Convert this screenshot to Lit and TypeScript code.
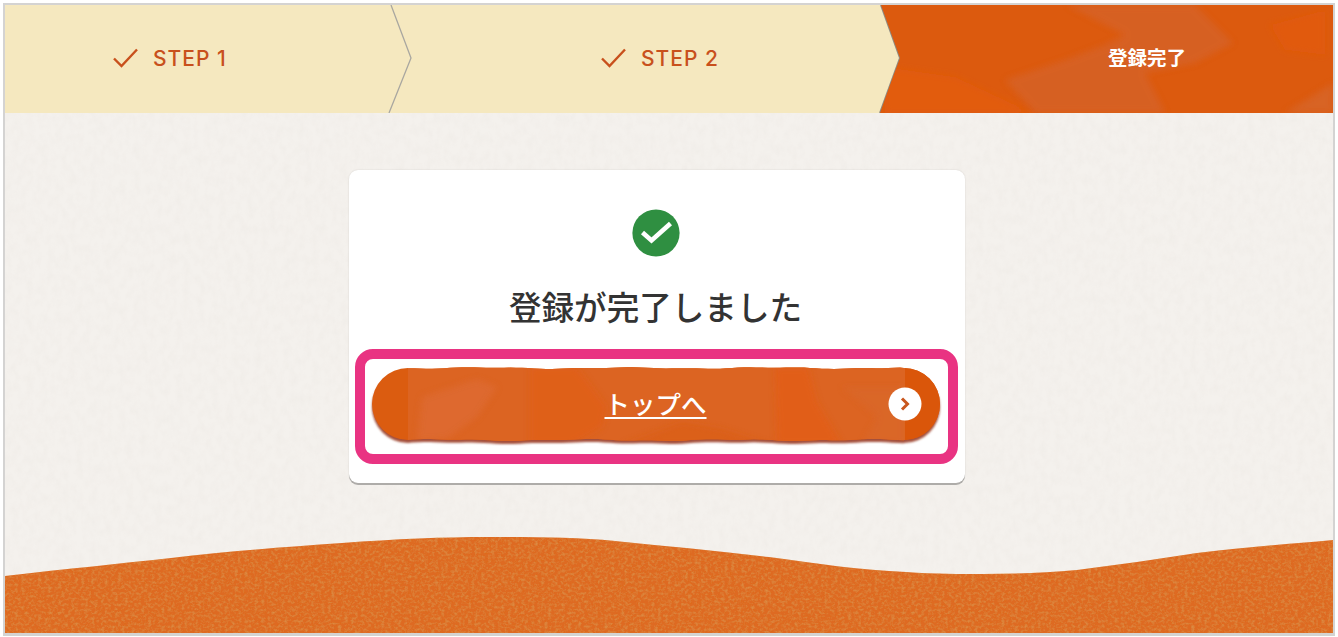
import { LitElement, html, css, svg } from "lit";
import { customElement } from "lit/decorators.js";

/** Hand-torn outline of the painted button: a pill whose long edges wobble slightly. */
function tornPill(w: number, h: number, r: number): string {
  const wob = (x: number, a: number) => a * Math.sin(x / 23) + a * 0.6 * Math.sin(x / 9 + 1);
  const top: string[] = [];
  const bottom: string[] = [];
  for (let x = r; x <= w - r; x += 6) {
    top.push(`L${x} ${(1 + wob(x, 0.6)).toFixed(2)}`);
  }
  for (let x = w - r; x >= r; x -= 6) {
    bottom.push(`L${x} ${(h - 1 + wob(x + 40, 0.7)).toFixed(2)}`);
  }
  return `M${r} 1 ${top.join(" ")} L${w - r} 1 A${r} ${r} 0 0 1 ${w - r} ${h - 1} ${bottom.join(" ")} L${r} ${h - 1} A${r} ${r} 0 0 1 ${r} 1Z`;
}

@customElement("app-root")
export class AppRoot extends LitElement {
  static styles = css`
    :host { display: block; width: 1338px; height: 637px; background: #fff; box-sizing: border-box; padding: 3px 3px 1px 3px; font-family: "Noto Sans CJK JP", sans-serif; overflow: hidden; }
    .frame { box-sizing: border-box; width: 1332px; height: 633px; border: 2px solid #d4d3d2; border-bottom-width: 3px; position: relative; display: flex; flex-direction: column; background: #f4f1ed; overflow: hidden; }
    .paper { position: absolute; inset: 0; width: 100%; height: 100%; }
    .bar { position: relative; height: 108px; display: flex; flex: none; background: #f5e8bf; }
    .bar-art { position: absolute; inset: 0; width: 100%; height: 100%; }
    .step { position: relative; display: flex; align-items: center; gap: 15px; color: #c8501c; font-family: "Inter", "Noto Sans", sans-serif; font-size: 21px; font-weight: 500; letter-spacing: 1px; box-sizing: border-box; padding-bottom: 2px; }
    .s1 { width: 386px; padding-left: 108px; }
    .s2 { width: 490px; padding-left: 210px; }
    .s3 { flex: 1; padding-left: 227px; padding-bottom: 5px; color: #fff; font-family: "Noto Sans CJK JP", sans-serif; font-size: 19.5px; font-weight: 700; letter-spacing: 0; }
    .tick { width: 25px; height: 20px; flex: none; }
    .content { position: relative; flex: 1; display: flex; justify-content: center; padding: 57px 25px 0 0; min-height: 0; }
    .card { box-sizing: border-box; width: 616px; height: 313px; background: #fff; border-radius: 9px; box-shadow: 0 2px 0 #aeaca9, 0 0 2px rgba(0,0,0,.12); display: flex; flex-direction: column; align-items: center; padding-top: 39px; }
    .ok { width: 48px; height: 48px; flex: none; margin-right: 2px; }
    h1 { margin: 21px 2px 0 0; font-size: 32.6px; line-height: 56px; height: 71px; font-weight: 500; color: #333; letter-spacing: 0; }
    .focus { box-sizing: border-box; width: 603px; height: 115px; border: 10px solid #e93382; border-radius: 18px; padding: 8px 7px; display: flex; background: #fff; }
    .btn { position: relative; flex: 1; height: 78px; display: flex; align-items: center; justify-content: center; color: #fff; font-size: 25.5px; font-weight: 500; }
    .btn-art { position: absolute; inset: 0; width: 100%; height: 100%; overflow: visible; }
    .label { position: relative; margin-right: 2px; margin-bottom: 8px; text-decoration: underline; text-decoration-thickness: 2px; text-underline-offset: 3px; }
    .go { position: absolute; right: 19px; top: 20px; width: 34px; height: 34px; }
    .wave { display: block; flex: none; width: 1328px; height: 96px; position: relative; }
  `;

  private tick() {
    return html`<svg class="tick" viewBox="0 0 25 20"><path d="M1 10.5 8.5 18 24 1.5" fill="none" stroke="#c8501c" stroke-width="2.4"/></svg>`;
  }

  render() {
    const pill = tornPill(568, 74, 36);
    return html`
      <div class="frame">
        <svg class="paper" aria-hidden="true">
          <filter id="paper" x="0" y="0" width="100%" height="100%">
            <feTurbulence type="fractalNoise" baseFrequency="0.14 0.1" numOctaves="4" seed="7"/>
            <feColorMatrix values="0 0 0 0 .62  0 0 0 0 .56  0 0 0 0 .5  0 0 0 .5 -.18"/>
          </filter>
          <rect width="100%" height="100%" filter="url(#paper)" opacity=".3"/>
        </svg>
        <div class="bar">
          <svg class="bar-art" viewBox="0 0 1328 108" preserveAspectRatio="none" aria-hidden="true">
            ${svg`
            <defs>
              <clipPath id="stepClip"><path d="M876 0H1328V108H875L895 53Z"/></clipPath>
              <filter id="soft" x="-10%" y="-20%" width="120%" height="140%"><feGaussianBlur stdDeviation="3"/></filter>
            </defs>
            <path d="M386 0 406 53 384 108" fill="none" stroke="#a9a7a0" stroke-width="1.3"/>
            <path d="M876 0 895 53 875 108" fill="none" stroke="#8f8a80" stroke-width="2"/>
            <g clip-path="url(#stepClip)">
              <rect x="870" width="460" height="108" fill="#dc5a0e"/>
              <path d="M1062 0H1190L1228 38 1190 58 1140 68 1160 108H1030L1000 75 1060 55 1100 40 1120 30Z" fill="#d5642c" opacity=".75" filter="url(#soft)"/>
              <path d="M880 62 950 72 1010 100 1025 108H880Z" fill="#e25b0a" filter="url(#soft)"/>
              <path d="M1280 108 1328 78V108Z" fill="#d6672e" opacity=".7" filter="url(#soft)"/>
              <path d="M1265 20 1320 5V50L1280 45Z" fill="#e15a08" filter="url(#soft)"/>
            </g>`}
          </svg>
          <div class="step s1">${this.tick()}<span>STEP 1</span></div>
          <div class="step s2">${this.tick()}<span>STEP 2</span></div>
          <div class="step s3"><span>登録完了</span></div>
        </div>
        <div class="content">
          <div class="card">
            <svg class="ok" viewBox="0 0 48 48" aria-hidden="true">
              <circle cx="24" cy="24" r="23.6" fill="#2f8f41"/>
              <path d="M10.5 23.5 19.5 31.5 38.5 14.5" fill="none" stroke="#fff" stroke-width="4.6"/>
            </svg>
            <h1>登録が完了しました</h1>
            <div class="focus">
              <a class="btn">
                <svg class="btn-art" viewBox="0 0 569 78" aria-hidden="true">
                  ${svg`
                  <defs>
                    <filter id="shade" x="-2%" y="-10%" width="104%" height="130%"><feGaussianBlur stdDeviation="1"/></filter>
                    <filter id="btnSoft" x="-20%" y="-20%" width="140%" height="140%"><feGaussianBlur stdDeviation="3"/></filter>
                    <clipPath id="pill"><path d="${pill}"/></clipPath>
                  </defs>
                  <path d="${pill}" transform="translate(0 3)" fill="#a4503a" filter="url(#shade)"/>
                  <g clip-path="url(#pill)">
                    <rect width="569" height="78" fill="#db5c10"/>
                    <rect x="36" width="497" height="78" fill="#dc6422"/>
                    <path d="M50 30 105 12 125 20 105 50 75 72 45 74Z" fill="#de6c34" opacity=".7" filter="url(#btnSoft)"/>
                    <path d="M158 0H205L235 40 230 60 200 78H158Z" fill="#e15f16" opacity=".75" filter="url(#btnSoft)"/>
                    <path d="M250 78 310 55 350 62 400 78Z" fill="#da5f18" opacity=".7" filter="url(#btnSoft)"/>
                    <path d="M403 0H436L445 35 470 78H405Z" fill="#e35d12" opacity=".75" filter="url(#btnSoft)"/>
                    <path d="M470 20H533V78H490L505 50Z" fill="#d9682a" opacity=".7" filter="url(#btnSoft)"/>
                    <rect x="533" width="36" height="78" fill="#da560a"/>
                  </g>`}
                </svg>
                <span class="label">トップへ</span>
                <svg class="go" viewBox="0 0 34 34" aria-hidden="true">
                  <circle cx="17" cy="17" r="16.5" fill="#fff"/>
                  <path d="M14 11.5 19.5 17 14 22.5" fill="none" stroke="#c9571e" stroke-width="3"/>
                </svg>
              </a>
            </div>
          </div>
        </div>
        <svg class="wave" viewBox="0 0 1328 96" aria-hidden="true">
          <filter id="grain" x="0" y="0" width="100%" height="100%">
            <feTurbulence type="fractalNoise" baseFrequency="0.3 0.36" numOctaves="4" seed="4"/>
            <feGaussianBlur stdDeviation=".7"/>
            <feColorMatrix values="0 0 0 0 .7  0 0 0 0 .3  0 0 0 0 .07  0 0 0 1.6 -.68"/>
            <feComposite in2="SourceGraphic" operator="in" result="n"/>
            <feMerge><feMergeNode in="SourceGraphic"/><feMergeNode in="n"/></feMerge>
          </filter>
          <path d="M0 39C60 32 112 27 166 21 225 14 280 10 337 6 390 2 440 0 482 0 530 0 570 0 610 4 660 9 712 14 764 20 815 27 855 33 901 35 930 37 955 37 978 37 1010 37 1040 36 1072 33 1112 28 1152 22 1192 16 1240 10 1285 7 1328 3V96H0Z" fill="#de6b22" filter="url(#grain)"/>
        </svg>
      </div>
    `;
  }
}
